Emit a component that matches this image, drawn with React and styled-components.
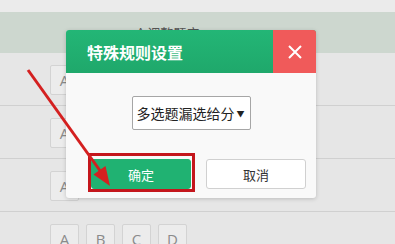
import React from "react";
import styled, { createGlobalStyle } from "styled-components";

const Global = createGlobalStyle`
  html, body { margin: 0; padding: 0; }
  body {
    width: 395px;
    height: 244px;
    overflow: hidden;
    background: #e6e6e6;
    font-family: "Noto Sans CJK SC", "Noto Sans", sans-serif;
  }
`;

const Page = styled.div`
  position: relative;
  width: 395px;
  height: 244px;
  overflow: hidden;
`;

const TopBand = styled.div`
  height: 12px;
  background: #ebebeb;
`;

const HeadBand = styled.div`
  height: 41px;
  background: #cdd7cf;
  display: flex;
  align-items: center;
  padding-left: 137px;
  color: #555;
  font-size: 13px;
`;

const Row = styled.div`
  height: 53px;
  border-bottom: 1px solid #d0d0d0;
  display: flex;
  align-items: flex-start;
  gap: 7px;
  padding: 12px 0 0 50px;
  box-sizing: border-box;
`;

const Opt = styled.span`
  width: 29px;
  height: 30px;
  box-sizing: border-box;
  border: 1px solid #d3d3d3;
  border-radius: 2px;
  background: #ececec;
  color: #8a8a8a;
  font-family: "Open Sans", sans-serif;
  font-size: 15px;
  display: flex;
  align-items: center;
  justify-content: center;
`;

const Dialog = styled.div`
  position: absolute;
  left: 66px;
  top: 30px;
  width: 250px;
  height: 168px;
  background: #f9f9f9;
  border-radius: 3px;
  box-shadow: 0 1px 4px rgba(0, 0, 0, 0.18);
  overflow: hidden;
  display: flex;
  flex-direction: column;
`;

const Header = styled.div`
  height: 43px;
  display: flex;
  background: linear-gradient(#23b676, #1fa86b);
`;

const Title = styled.div`
  flex: 1;
  display: flex;
  align-items: center;
  padding-left: 21px;
  color: #fff;
  font-size: 16px;
  font-weight: 700;
`;

const Close = styled.div`
  width: 43px;
  background: #f05a5a;
  display: flex;
  align-items: center;
  justify-content: center;
`;

const Body = styled.div`
  display: flex;
  justify-content: center;
  padding-top: 23px;
`;

const Select = styled.div`
  width: 119px;
  height: 34px;
  box-sizing: border-box;
  border: 1px solid #a6a6a6;
  border-radius: 2px;
  background: #fff;
  display: flex;
  align-items: center;
  justify-content: space-between;
  padding: 0 5px 0 4px;
  color: #222;
  font-size: 14px;
  span { font-size: 8px; }
`;

const Footer = styled.div`
  display: flex;
  gap: 15px;
  padding: 29px 0 0 25px;
`;

const Btn = styled.div`
  width: 100px;
  height: 30px;
  box-sizing: border-box;
  border-radius: 3px;
  display: flex;
  align-items: center;
  justify-content: center;
  font-size: 13px;
  background: ${(p) => (p.$primary ? "#20b272" : "#fff")};
  color: ${(p) => (p.$primary ? "#fff" : "#333")};
  border: 1px solid ${(p) => (p.$primary ? "#20b272" : "#d0d0d0")};
`;

const Mark = styled.div`
  position: absolute;
  left: 88px;
  top: 153px;
  width: 107px;
  height: 39px;
  box-sizing: border-box;
  border: 3px solid #c4161c;
`;

const Arrow = styled.svg`
  position: absolute;
  left: 0;
  top: 0;
`;

const rows = [["A"], ["A"], ["A"], ["A", "B", "C", "D"]];

export default function App() {
  return (
    <Page>
      <Global />
      <TopBand />
      <HeadBand>^ 调整题序</HeadBand>
      {rows.map((r, i) => (
        <Row key={i}>
          {r.map((o) => (
            <Opt key={o}>{o}</Opt>
          ))}
        </Row>
      ))}
      <Dialog>
        <Header>
          <Title>特殊规则设置</Title>
          <Close>
            <svg width="16" height="16" viewBox="0 0 16 16">
              <path d="M2 2L14 14M14 2L2 14" stroke="#fff" strokeWidth="2" />
            </svg>
          </Close>
        </Header>
        <Body>
          <Select>
            多选题漏选给分<span>▼</span>
          </Select>
        </Body>
        <Footer>
          <Btn $primary>确定</Btn>
          <Btn>取消</Btn>
        </Footer>
      </Dialog>
      <Mark />
      <Arrow width="395" height="244">
        <line x1="28" y1="70" x2="101" y2="172" stroke="#d42020" strokeWidth="3" />
        <polygon points="110,186 93.5,174.5 105.5,166" fill="#d42020" />
      </Arrow>
    </Page>
  );
}
